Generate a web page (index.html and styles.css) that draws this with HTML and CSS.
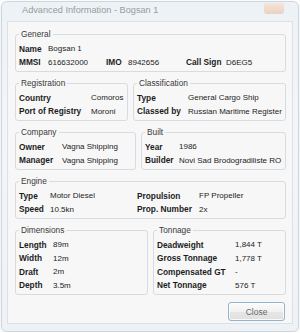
FILE: index.html
```html
<!DOCTYPE html>
<html lang="en">
<head>
    <meta charset="UTF-8">
    <title>Advanced Information - Bogsan 1</title>
    <link rel="stylesheet" href="styles.css">
</head>
<body>

    <div class="window">
        <div class="titlebar">
            <span class="title">Advanced Information - Bogsan 1</span>
            <span class="title-close"></span>
        </div>

        <div class="client">
            <fieldset class="group">
                <legend>General</legend>
                <div class="grid cols-general">
                    <span class="key">Name</span><span class="val wide">Bogsan 1</span>
                    <span class="key">MMSI</span><span class="val">616632000</span>
                    <span class="key">IMO</span><span class="val">8942656</span>
                    <span class="key">Call Sign</span><span class="val">D6EG5</span>
                </div>
            </fieldset>

            <div class="pair">
                <fieldset class="group w-reg">
                    <legend>Registration</legend>
                    <div class="grid cols-reg">
                        <span class="key">Country</span><span class="val">Comoros</span>
                        <span class="key">Port of Registry</span><span class="val">Moroni</span>
                    </div>
                </fieldset>
                <fieldset class="group grow">
                    <legend>Classification</legend>
                    <div class="grid cols-class">
                        <span class="key">Type</span><span class="val">General Cargo Ship</span>
                        <span class="key">Classed by</span><span class="val">Russian Maritime Register</span>
                    </div>
                </fieldset>
            </div>

            <div class="pair">
                <fieldset class="group w-company">
                    <legend>Company</legend>
                    <div class="grid cols-company">
                        <span class="key">Owner</span><span class="val">Vagna Shipping</span>
                        <span class="key">Manager</span><span class="val">Vagna Shipping</span>
                    </div>
                </fieldset>
                <fieldset class="group grow">
                    <legend>Built</legend>
                    <div class="grid cols-built">
                        <span class="key">Year</span><span class="val">1986</span>
                        <span class="key">Builder</span><span class="val">Novi Sad Brodogradiliste RO</span>
                    </div>
                </fieldset>
            </div>

            <fieldset class="group">
                <legend>Engine</legend>
                <div class="grid cols-engine">
                    <span class="key">Type</span><span class="val">Motor Diesel</span>
                    <span class="key">Propulsion</span><span class="val">FP Propeller</span>
                    <span class="key">Speed</span><span class="val">10.5kn</span>
                    <span class="key">Prop. Number</span><span class="val">2x</span>
                </div>
            </fieldset>

            <div class="pair">
                <fieldset class="group half">
                    <legend>Dimensions</legend>
                    <div class="grid cols-dim">
                        <span class="key">Length</span><span class="val">89m</span>
                        <span class="key">Width</span><span class="val">12m</span>
                        <span class="key">Draft</span><span class="val">2m</span>
                        <span class="key">Depth</span><span class="val">3.5m</span>
                    </div>
                </fieldset>
                <fieldset class="group half">
                    <legend>Tonnage</legend>
                    <div class="grid cols-ton">
                        <span class="key">Deadweight</span><span class="val">1,844 T</span>
                        <span class="key">Gross Tonnage</span><span class="val">1,778 T</span>
                        <span class="key">Compensated GT</span><span class="val">-</span>
                        <span class="key">Net Tonnage</span><span class="val">576 T</span>
                    </div>
                </fieldset>
            </div>

            <div class="actions">
                <button class="btn">Close</button>
            </div>
        </div>
    </div>

</body>
</html>
```

FILE: styles.css
```css
body {
    margin: 0;
    background: #ffffff;
    font-family: "Liberation Sans", Arial, sans-serif;
    color: #1c1c1c;
}
.window {
    width: 296px;
    height: 329px;
    margin: 1px 0 0 1px;
    border: 1px solid #cdd6df;
    border-radius: 6px;
    background: linear-gradient(#edf2f7, #f3f6f9 40%, #eef2f6);
    box-shadow: 0 1px 3px rgba(90, 110, 140, 0.18);
}
.titlebar {
    display: flex;
    align-items: flex-start;
    height: 19px;
}
.title {
    padding-left: 20px;
    font-size: 9.2px;
    line-height: 17px;
    color: #9a9a9a;
}
.title-close {
    width: 20px;
    height: 11px;
    margin: 1px 14px 0 auto;
    border-radius: 0 0 3px 3px;
    background: linear-gradient(#f5e2d4, #ecc9b2);
    opacity: 0.8;
}
.client {
    margin: 0 5px;
    padding: 7px 6px 0 7px;
    height: 294px;
    border: 1px solid #dbe1e7;
    background: #f7f7f7;
}
.group {
    margin: 0 0 6px 0;
    padding: 3px 3px 2px 3px;
    border: 1px solid #d6dce2;
    border-radius: 3px;
    min-width: 0;
}
.group legend {
    padding: 0 2px;
    font-size: 8.3px;
    line-height: 10px;
    color: #3a3a3a;
}
.pair {
    display: flex;
    gap: 5px;
}
.pair .group {
    box-sizing: border-box;
}
.w-reg {
    width: 113px;
}
.w-company {
    width: 121px;
}
.grow {
    flex: 1;
}
.half {
    width: 133px;
}
.grid {
    display: grid;
    grid-auto-rows: 13.5px;
    align-items: center;
    white-space: nowrap;
}
.key {
    font-weight: bold;
    font-size: 8.3px;
}
.val {
    font-size: 8px;
}
.wide {
    grid-column: 2 / -1;
}
.cols-general {
    grid-template-columns: 29px 58px 22px 58px 40px 1fr;
}
.cols-reg {
    grid-template-columns: 72px 1fr;
}
.cols-class {
    grid-template-columns: 51px 1fr;
}
.cols-company {
    grid-template-columns: 43px 1fr;
}
.cols-built {
    grid-template-columns: 34px 1fr;
}
.cols-engine {
    grid-template-columns: 31px 87px 62px 1fr;
}
.cols-dim {
    grid-template-columns: 34px 1fr;
}
.cols-ton {
    grid-template-columns: 78px 1fr;
}
.actions {
    display: flex;
    justify-content: flex-end;
    padding: 1px 1px 0 0;
}
.btn {
    width: 57px;
    height: 19px;
    padding: 0;
    border: 1px solid #93b4cf;
    border-radius: 3px;
    background: linear-gradient(#fbfbfb, #f1f1f1 50%, #e6e6e6 51%, #e0e0e0);
    box-shadow: inset 0 0 0 1px rgba(255, 255, 255, 0.8);
    font-family: "Liberation Sans", Arial, sans-serif;
    font-size: 8.5px;
    color: #666666;
}
```
